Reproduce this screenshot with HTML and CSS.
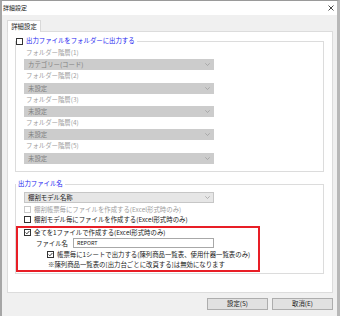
FILE: index.html
```html
<!DOCTYPE html>
<html lang="ja">
<head>
    <meta charset="UTF-8">
    <title>詳細設定</title>
    <link rel="stylesheet" href="styles.css">
</head>
<body>
    <div class="window">
        <!-- TITLE BAR -->
        <div class="titlebar">
            <span class="title">詳細設定</span>
            <svg class="close" width="6" height="6" viewBox="0 0 6 6">
                <path d="M0.5 0.5 L5.5 5.5 M5.5 0.5 L0.5 5.5" stroke="#333" stroke-width="0.9" fill="none"/>
            </svg>
        </div>

        <div class="content">
            <div class="tabs">
                <div class="tab">詳細設定</div>
            </div>

            <div class="panel">
                <!-- FOLDER OUTPUT -->
                <fieldset class="group">
                    <legend class="legend-check">
                        <span class="box"></span>出力ファイルをフォルダーに出力する
                    </legend>
                    <div class="level-label">フォルダー階層(1)</div>
                    <div class="combo disabled"><span>カテゴリー(コード)</span><span class="chev"></span></div>
                    <div class="level-label">フォルダー階層(2)</div>
                    <div class="combo disabled"><span>未設定</span><span class="chev"></span></div>
                    <div class="level-label">フォルダー階層(3)</div>
                    <div class="combo disabled"><span>未設定</span><span class="chev"></span></div>
                    <div class="level-label">フォルダー階層(4)</div>
                    <div class="combo disabled"><span>未設定</span><span class="chev"></span></div>
                    <div class="level-label">フォルダー階層(5)</div>
                    <div class="combo disabled"><span>未設定</span><span class="chev"></span></div>
                </fieldset>

                <!-- FILE NAME -->
                <fieldset class="group group-file">
                    <legend class="legend-text">出力ファイル名</legend>
                    <div class="combo"><span>棚割モデル名称</span><span class="chev"></span></div>
                    <div class="opt opt-first disabled"><span class="box"></span>棚割帳票毎にファイルを作成する(Excel形式時のみ)</div>
                    <div class="opt"><span class="box"></span>棚割モデル毎にファイルを作成する(Excel形式時のみ)</div>

                    <div class="highlight">
                        <div class="opt row-all">
                            <svg class="box-svg" width="7" height="7" viewBox="0 0 7 7"><rect x="0.5" y="0.5" width="6" height="6" fill="white" stroke="#333"/><polyline points="1.6,3.5 2.9,4.8 5.4,2" fill="none" stroke="#222" stroke-width="0.9"/></svg>全てを1ファイルで作成する(Excel形式時のみ)
                        </div>
                        <div class="filename">
                            <span>ファイル名</span>
                            <div class="input">REPORT</div>
                        </div>
                        <div class="opt row-sheet">
                            <svg class="box-svg" width="7" height="7" viewBox="0 0 7 7"><rect x="0.5" y="0.5" width="6" height="6" fill="white" stroke="#333"/><polyline points="1.6,3.5 2.9,4.8 5.4,2" fill="none" stroke="#222" stroke-width="0.9"/></svg>帳票毎に1シートで出力する(陳列商品一覧表、使用什器一覧表のみ)
                        </div>
                        <div class="note">※陳列商品一覧表の[出力台ごとに改頁する]は無効になります</div>
                    </div>
                </fieldset>
            </div>

            <div class="buttons">
                <button>設定(S)</button>
                <button>取消(E)</button>
            </div>
        </div>
    </div>
</body>
</html>
```

FILE: styles.css
```css
html, body {
    margin: 0;
    padding: 0;
}
body {
    width: 340px;
    height: 316px;
    overflow: hidden;
    font-family: "Noto Sans CJK JP", "Noto Sans", sans-serif;
    font-size: 6.4px;
    color: #1a1a1a;
}
.window {
    width: 340px;
    height: 316px;
    box-sizing: border-box;
    border-top: 1px solid #9a9a9a;
    border-left: 2px solid #a6a6a6;
    border-right: 3px solid #b8b8b8;
    background-color: #f0f0f0;
}
.titlebar {
    height: 14px;
    background-color: white;
    display: flex;
    align-items: center;
    justify-content: space-between;
    padding: 0 3px 0 1px;
}
.title {
    font-size: 6px;
    line-height: 14px;
}
.content {
    padding: 5px 4px 0 5px;
}
.tabs {
    display: flex;
}
.tab {
    position: relative;
    width: 34px;
    height: 12px;
    box-sizing: border-box;
    margin-bottom: -1px;
    background-color: white;
    border: 1px solid #d9d9d9;
    border-bottom: none;
    line-height: 11px;
    text-align: center;
}
.panel {
    height: 262px;
    box-sizing: border-box;
    background-color: white;
    border: 1px solid #dcdcdc;
    padding-top: 3px;
}
.group {
    width: 309px;
    box-sizing: border-box;
    margin: 0 0 0 7px;
    padding: 0 0 7.5px 0;
    border: 1px solid #dcdcdc;
    min-width: 0;
}
.group-file {
    margin-top: 6px;
    padding-bottom: 1px;
}
legend {
    padding: 0 2px 0 0;
    margin-left: 0;
    line-height: 12px;
    color: #2424f0;
}
.legend-check {
    display: flex;
    align-items: center;
}
.legend-check .box {
    margin-right: 3px;
}
.legend-text {
    padding-left: 2px;
}
.box {
    display: inline-block;
    width: 7px;
    height: 7px;
    box-sizing: border-box;
    border: 1px solid #333;
    background-color: white;
    flex-shrink: 0;
}
.box-svg {
    flex-shrink: 0;
    margin-right: 3px;
}
.level-label {
    height: 12.33px;
    line-height: 12.33px;
    margin-left: 10px;
    color: #a0a0a0;
}
.combo {
    width: 190px;
    height: 11px;
    box-sizing: border-box;
    margin-left: 8px;
    display: flex;
    align-items: center;
    justify-content: space-between;
    padding: 0 3px 0 3px;
    background-color: #e6e6e6;
    border: 1px solid #c6c6c6;
    line-height: 9px;
}
.group-file .combo {
    margin-top: 2px;
}
.combo.disabled {
    background-color: #cccccc;
    border-color: #cccccc;
    color: #808080;
}
.chev {
    width: 5px;
    height: 3px;
    background: url("data:image/svg+xml;utf8,<svg xmlns='http://www.w3.org/2000/svg' width='5' height='3' viewBox='0 0 5 3'><polyline points='0.3,0.3 2.5,2.5 4.7,0.3' fill='none' stroke='%23999' stroke-width='0.7'/></svg>") no-repeat center;
}
.opt {
    display: flex;
    align-items: center;
    height: 10.5px;
    margin-left: 8px;
}
.opt .box {
    margin-right: 3px;
}
.opt-first {
    margin-top: 1px;
}
.opt.disabled {
    color: #a0a0a0;
}
.opt.disabled .box {
    border-color: #c8c8c8;
}
.highlight {
    width: 244px;
    height: 46px;
    box-sizing: border-box;
    margin-top: 1px;
    border: 2px solid #e81e26;
}
.highlight .opt {
    margin-left: 0;
}
.row-all {
    height: 9px;
    padding-left: 6px;
}
.filename {
    height: 12px;
    display: flex;
    align-items: center;
    padding-left: 18px;
    gap: 5px;
}
.input {
    width: 141px;
    height: 10px;
    box-sizing: border-box;
    border: 1px solid #a8a8a8;
    padding-left: 3px;
    font-size: 5.4px;
    line-height: 8px;
}
.row-sheet {
    height: 11px;
    padding-left: 29px;
}
.note {
    height: 9px;
    line-height: 9px;
    padding-left: 30px;
}
.buttons {
    display: flex;
    justify-content: flex-end;
    gap: 4px;
    margin-top: 5px;
}
button {
    width: 61px;
    height: 12px;
    padding: 0;
    background-color: #e1e1e1;
    border: 1px solid #adadad;
    font-family: inherit;
    font-size: 6.4px;
    line-height: 10px;
    color: #1a1a1a;
}
```
